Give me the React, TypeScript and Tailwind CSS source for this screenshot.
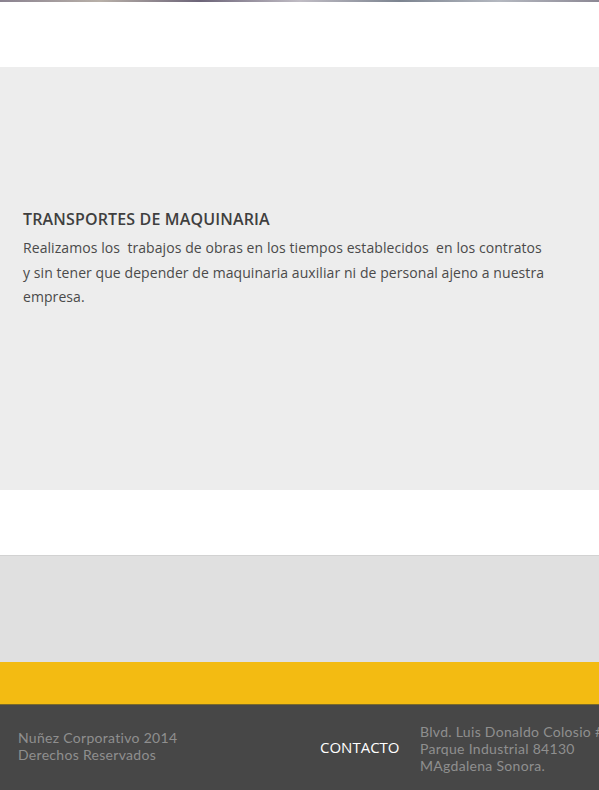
export default function App() {
  return (
    <div className="w-[599px] h-[790px] overflow-hidden bg-white font-['Open_Sans',sans-serif]">
      {/* strip of the header photo */}
      <div className="h-[2px] bg-[linear-gradient(90deg,#8a8290,#b8b0a8,#6c6478,#c0bcc4,#7c8490,#b4b8c0,#8c8894)]" />
      <div className="h-[65px]" />

      <section className="h-[423px] bg-[#ededed] px-[23px] pt-[141px]">
        <h2 className="text-[16px] font-semibold text-[#3f3f3f] leading-[22px] tracking-[0.15px]">
          TRANSPORTES DE MAQUINARIA
        </h2>
        <p className="mt-[6px] text-[14px] leading-[24.5px] tracking-[0.07px] text-[#4a4a4a] whitespace-pre">
          {"Realizamos los  trabajos de obras en los tiempos establecidos  en los contratos\ny sin tener que depender de maquinaria auxiliar ni de personal ajeno a nuestra\nempresa."}
        </p>
      </section>

      <div className="h-[65px]" />

      <div className="h-[107px] bg-[#e0e0e0] border-t border-[#d2d2d2]" />
      <div className="h-[43px] bg-[#f3bb12] border-b border-[#7a6a2a]" />

      <footer className="h-[85px] bg-[#474747] flex items-center">
        <div className="w-[302px] shrink-0 pl-[18px] pb-[4px] font-['Lato',sans-serif] text-[14px] leading-[17px] tracking-[0.3px] text-[#8f8f8f]">
          <div>Nuñez Corporativo 2014</div>
          <div>Derechos Reservados</div>
        </div>
        <div className="w-[118px] shrink-0 pl-[18px] text-[15px] font-medium text-white">CONTACTO</div>
        <div className="flex-1 whitespace-nowrap font-['Lato',sans-serif] text-[14px] leading-[17px] tracking-[0.3px] text-[#8f8f8f] pt-[2px]">
          <div>Blvd. Luis Donaldo Colosio #</div>
          <div>Parque Industrial 84130</div>
          <div>MAgdalena Sonora.</div>
        </div>
      </footer>
    </div>
  );
}
